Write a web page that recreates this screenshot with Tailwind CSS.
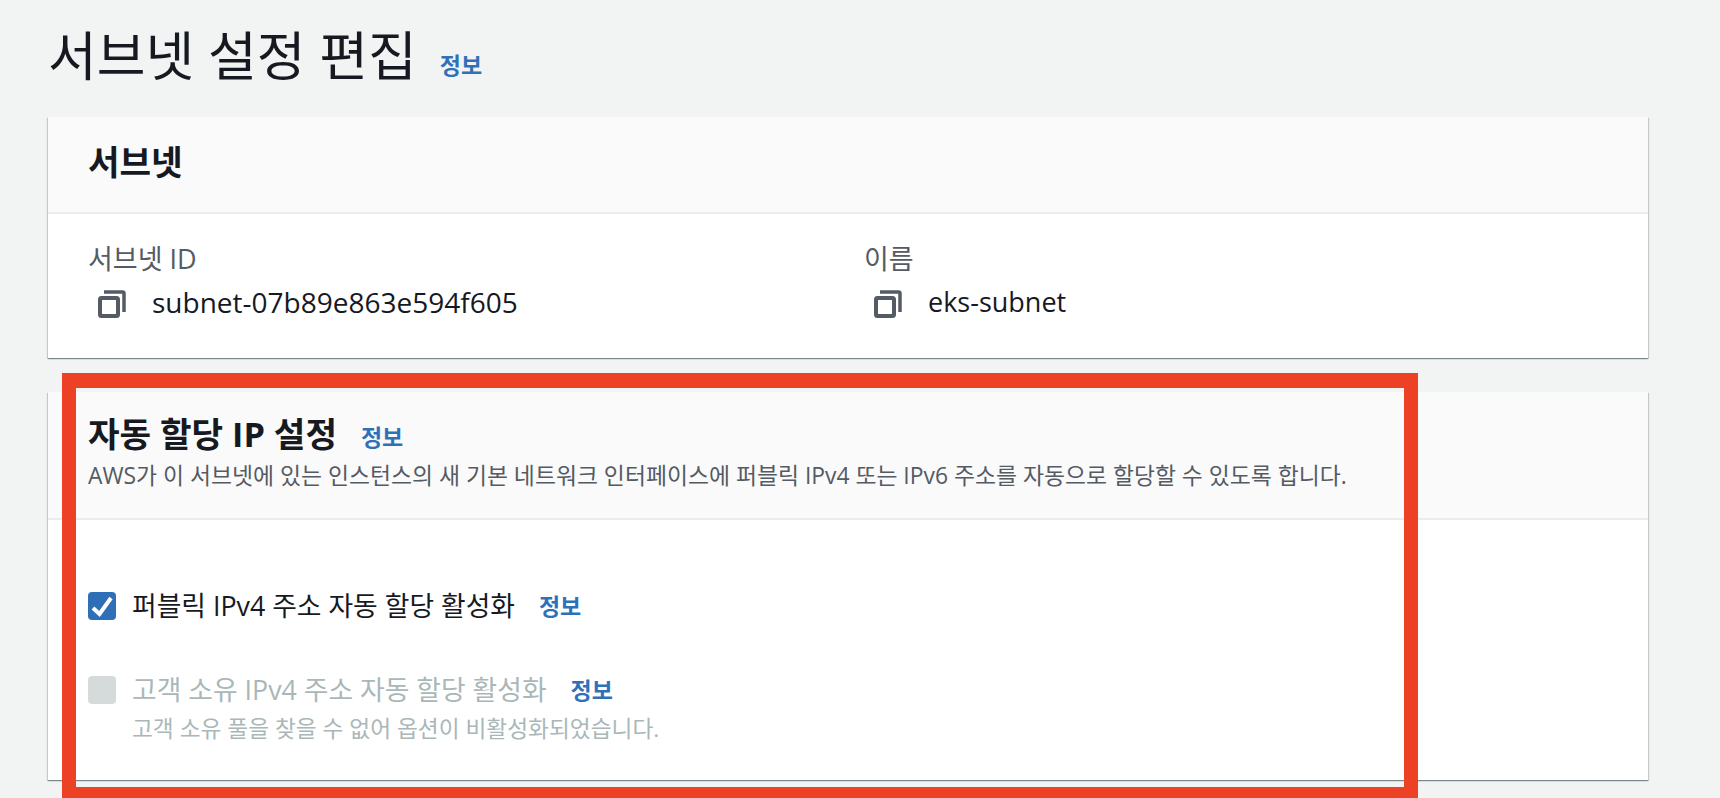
<!DOCTYPE html>
<html lang="ko">
<head>
<meta charset="utf-8">
<script src="https://cdn.jsdelivr.net/npm/@tailwindcss/browser@4"></script>
</head>
<body class="m-0 h-[798px] overflow-hidden bg-[#f2f3f3] font-['Open_Sans','Noto_Sans_CJK_KR',sans-serif] text-[#16191f]">
<div class="relative h-[798px] overflow-hidden px-[48px] pt-[24px]">
  <div class="flex h-[93px] items-start gap-[23px]">
    <h1 class="text-[53px] leading-[64px] font-normal whitespace-nowrap">서브넷 설정 편집</h1>
    <a class="mt-[25px] text-[23px] leading-[32px] font-bold text-[#2f71b8]">정보</a>
  </div>

  <section class="w-[1600px] bg-white shadow-[0_1px_1px_0_rgba(0,28,36,0.3),1px_1px_1px_0_rgba(0,28,36,0.15),-1px_1px_1px_0_rgba(0,28,36,0.15)]">
    <div class="flex h-[97px] items-start border-b-2 border-[#eaeded] bg-[#fafafa] px-[40px] pt-[23px]">
      <h2 class="text-[34.300px] leading-[44px] font-bold">서브넷</h2>
    </div>
    <div class="grid h-[144px] grid-cols-[776px_1fr] px-[40px] pt-[27px]">
      <div>
        <div class="text-[27px] leading-[36px] text-[#545b64]">서브넷 ID</div>
        <div class="mt-[7px] flex items-center pl-[10px]">
          <svg class="mt-[4px] h-[28px] w-[28px] shrink-0" viewBox="0 0 28 28" fill="none" stroke="#545b64"><rect x="2" y="8" width="18" height="18" rx="1.500" stroke-width="4"/><path d="M6 2H24.500a1.500 1.500 0 0 1 1.500 1.500V22" stroke-width="3.500"/></svg>
          <span class="ml-[26px] text-[28px] leading-[36px]">subnet-07b89e863e594f605</span>
        </div>
      </div>
      <div>
        <div class="text-[27px] leading-[36px] text-[#545b64]">이름</div>
        <div class="mt-[7px] flex items-center pl-[10px]">
          <svg class="mt-[4px] h-[28px] w-[28px] shrink-0" viewBox="0 0 28 28" fill="none" stroke="#545b64"><rect x="2" y="8" width="18" height="18" rx="1.500" stroke-width="4"/><path d="M6 2H24.500a1.500 1.500 0 0 1 1.500 1.500V22" stroke-width="3.500"/></svg>
          <span class="ml-[26px] text-[27px] leading-[36px]">eks-subnet</span>
        </div>
      </div>
    </div>
  </section>

  <section class="mt-[34px] w-[1600px] bg-white shadow-[0_1px_1px_0_rgba(0,28,36,0.3),1px_1px_1px_0_rgba(0,28,36,0.15),-1px_1px_1px_0_rgba(0,28,36,0.15)]">
    <div class="h-[128px] border-b-2 border-[#eaeded] bg-[#fafafa] px-[40px] pt-[20px]">
      <div class="flex items-start gap-[24px]">
        <h2 class="text-[34.300px] leading-[44px] font-bold whitespace-nowrap">자동 할당 IP 설정</h2>
        <a class="mt-[9px] text-[23px] leading-[32px] font-bold text-[#2f71b8]">정보</a>
      </div>
      <p class="mt-[5px] text-[22.850px] leading-[30px] text-[#545b64] whitespace-nowrap">AWS가 이 서브넷에 있는 인스턴스의 새 기본 네트워크 인터페이스에 퍼블릭 IPv4 또는 IPv6 주소를 자동으로 할당할 수 있도록 합니다.</p>
    </div>
    <div class="flex h-[260px] flex-col px-[40px] pt-[68px]">
      <div class="flex h-[36px] items-center">
        <span class="flex h-[28px] w-[28px] shrink-0 items-center justify-center rounded-[4px] bg-[#2f6fb8]">
          <svg class="h-[28px] w-[28px]" viewBox="0 0 28 28" fill="none" stroke="#fff" stroke-width="4"><path d="M5 16l6.500 6L23 6"/></svg>
        </span>
        <span class="ml-[16px] text-[26.800px] leading-[36px] whitespace-nowrap">퍼블릭 IPv4 주소 자동 할당 활성화</span>
        <a class="ml-[24px] text-[23px] leading-[32px] font-bold text-[#2f71b8]">정보</a>
      </div>
      <div class="mt-[48px] flex h-[36px] items-center">
        <span class="h-[28px] w-[28px] shrink-0 rounded-[4px] bg-[#d5dbdb]"></span>
        <span class="ml-[16px] text-[26.800px] leading-[36px] whitespace-nowrap text-[#aab7b8]">고객 소유 IPv4 주소 자동 할당 활성화</span>
        <a class="ml-[24px] text-[23px] leading-[32px] font-bold text-[#2f71b8]">정보</a>
      </div>
      <p class="mt-[6px] pl-[44px] text-[22.700px] leading-[30px] whitespace-nowrap text-[#aab7b8]">고객 소유 풀을 찾을 수 없어 옵션이 비활성화되었습니다.</p>
    </div>
  </section>

  <div class="absolute top-[373px] left-[62px] h-[450px] w-[1356px] border-t-[15px] border-r-[14px] border-b-[36px] border-l-[14px] border-[#ec4125]"></div>
</div>
</body>
</html>
